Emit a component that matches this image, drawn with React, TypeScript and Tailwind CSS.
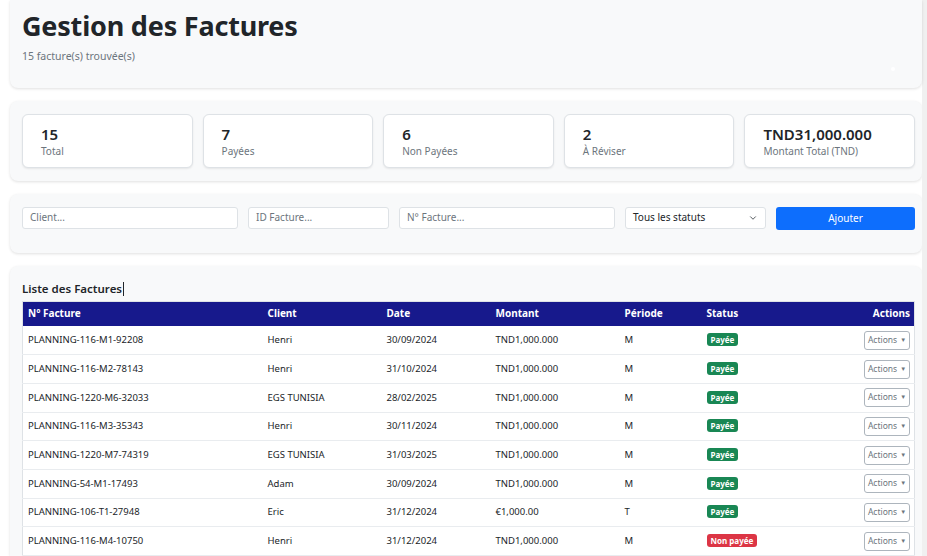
import { ChevronDown } from "lucide-react";

type Row = {
  num: string;
  client: string;
  date: string;
  montant: string;
  periode: string;
  paid: boolean;
};

const rows: Row[] = [
  { num: "PLANNING-116-M1-92208", client: "Henri", date: "30/09/2024", montant: "TND1,000.000", periode: "M", paid: true },
  { num: "PLANNING-116-M2-78143", client: "Henri", date: "31/10/2024", montant: "TND1,000.000", periode: "M", paid: true },
  { num: "PLANNING-1220-M6-32033", client: "EGS TUNISIA", date: "28/02/2025", montant: "TND1,000.000", periode: "M", paid: true },
  { num: "PLANNING-116-M3-35343", client: "Henri", date: "30/11/2024", montant: "TND1,000.000", periode: "M", paid: true },
  { num: "PLANNING-1220-M7-74319", client: "EGS TUNISIA", date: "31/03/2025", montant: "TND1,000.000", periode: "M", paid: true },
  { num: "PLANNING-54-M1-17493", client: "Adam", date: "30/09/2024", montant: "TND1,000.000", periode: "M", paid: true },
  { num: "PLANNING-106-T1-27948", client: "Eric", date: "31/12/2024", montant: "€1,000.00", periode: "T", paid: true },
  { num: "PLANNING-116-M4-10750", client: "Henri", date: "31/12/2024", montant: "TND1,000.000", periode: "M", paid: false },
];

const stats = [
  { value: "15", label: "Total" },
  { value: "7", label: "Payées" },
  { value: "6", label: "Non Payées" },
  { value: "2", label: "À Réviser" },
  { value: "TND31,000.000", label: "Montant Total (TND)" },
];

const font = { fontFamily: '"Noto Sans", "Open Sans", sans-serif' };

export default function App() {
  return (
    <div className="flex h-[556px] w-[927px] overflow-hidden bg-white text-[#212529]" style={font}>
      <main className="flex w-[922px] flex-col pl-[10px]">
        <Header />
        <StatsCard />
        <Filters />
        <InvoiceList />
      </main>
      <div className="w-[5px] bg-[#f0f0f0]" />
    </div>
  );
}

function Card({ className, children }: { className: string; children: React.ReactNode }) {
  return (
    <section
      className={`rounded-lg bg-[#f8f9fa] shadow-[0_1px_3px_rgba(0,0,0,0.12)] ${className}`}
    >
      {children}
    </section>
  );
}

function Header() {
  return (
    <Card className="relative h-[89px] rounded-t-none pl-3 pt-[7px]">
      <h1 className="text-[27px] font-bold leading-[38px] tracking-[-0.2px] text-[#212529]">
        Gestion des Factures
      </h1>
      <p className="mt-[4px] text-[10.5px] text-[#6c757d]">15 facture(s) trouvée(s)</p>
      <span className="absolute right-[27px] top-[67px] h-[4px] w-[4px] rounded-full bg-white" />
    </Card>
  );
}

function StatsCard() {
  return (
    <Card className="mt-[13px] grid grid-cols-5 gap-[10px] py-[13px] pl-3 pr-[7px]">
      {stats.map((s) => (
        <div
          key={s.label}
          className="flex h-[54px] flex-col justify-center rounded-md border border-[#dee2e6] bg-white pl-[18px] shadow-[0_1px_2px_rgba(0,0,0,0.08)]"
        >
          <div className="text-[15px] font-semibold leading-[20px] text-[#212529]">{s.value}</div>
          <div className="text-[10px] leading-[14px] text-[#6c757d]">{s.label}</div>
        </div>
      ))}
    </Card>
  );
}

function Filters() {
  const input =
    "h-[22px] rounded-[3px] border border-[#dee2e6] bg-white px-[7px] text-[10px] text-[#6c757d] flex items-center";
  return (
    <Card className="mt-[13px] flex gap-[10px] pb-[23px] pl-3 pr-[7px] pt-[13px]">
      <div className={`${input} w-[216px]`}>Client...</div>
      <div className={`${input} w-[141px]`}>ID Facture...</div>
      <div className={`${input} w-[216px]`}>N° Facture...</div>
      <div className={`${input} w-[141px] justify-between text-[#212529]`}>
        <span>Tous les statuts</span>
        <ChevronDown size={10} strokeWidth={2} className="text-[#343a40]" />
      </div>
      <button
        type="button"
        className="h-[23px] flex-1 rounded-[3px] bg-[#0d6efd] text-[10px] text-white"
      >
        Ajouter
      </button>
    </Card>
  );
}

function InvoiceList() {
  return (
    <Card className="mt-[13px] flex-1 rounded-b-none pl-3 pr-[7px] pt-[15px]">
      <h2 className="flex items-center text-[11.5px] font-semibold leading-[16px] text-[#212529]">
        Liste des Factures
        <span className="ml-[1px] h-[14px] w-px bg-[#212529]" />
      </h2>
      <table className="mt-[4px] w-full border border-[#dee2e6] bg-white text-[9.5px]">
        <thead>
          <tr className="h-[25px] bg-[#17198c] text-left text-[10px] font-bold text-white">
            <th className="w-[245px] pl-[5px] font-bold">N° Facture</th>
            <th className="w-[119px] font-bold">Client</th>
            <th className="w-[109px] font-bold">Date</th>
            <th className="w-[129px] font-bold">Montant</th>
            <th className="w-[82px] font-bold">Période</th>
            <th className="font-bold">Status</th>
            <th className="pr-[4px] text-right font-bold">Actions</th>
          </tr>
        </thead>
        <tbody>
          {rows.map((r) => (
            <tr key={r.num} className="h-[28.7px] border-b border-[#e9ecef] text-[#212529]">
              <td className="pl-[5px]">{r.num}</td>
              <td>{r.client}</td>
              <td>{r.date}</td>
              <td>{r.montant}</td>
              <td>{r.periode}</td>
              <td>
                <StatusBadge paid={r.paid} />
              </td>
              <td className="pr-[4px] text-right">
                <ActionsButton />
              </td>
            </tr>
          ))}
        </tbody>
      </table>
    </Card>
  );
}

function StatusBadge({ paid }: { paid: boolean }) {
  return (
    <span
      className={`inline-block rounded-[3px] px-[4px] py-[1px] text-[8px] font-bold leading-[11px] text-white ${
        paid ? "bg-[#198754]" : "bg-[#dc3545]"
      }`}
    >
      {paid ? "Payée" : "Non payée"}
    </span>
  );
}

function ActionsButton() {
  return (
    <button
      type="button"
      className="inline-flex h-[19px] w-[46px] items-center justify-center gap-[3px] rounded-[3px] border border-[#adb5bd] bg-white text-[8.5px] text-[#6c757d]"
    >
      Actions
      <span className="text-[6px]">▼</span>
    </button>
  );
}
